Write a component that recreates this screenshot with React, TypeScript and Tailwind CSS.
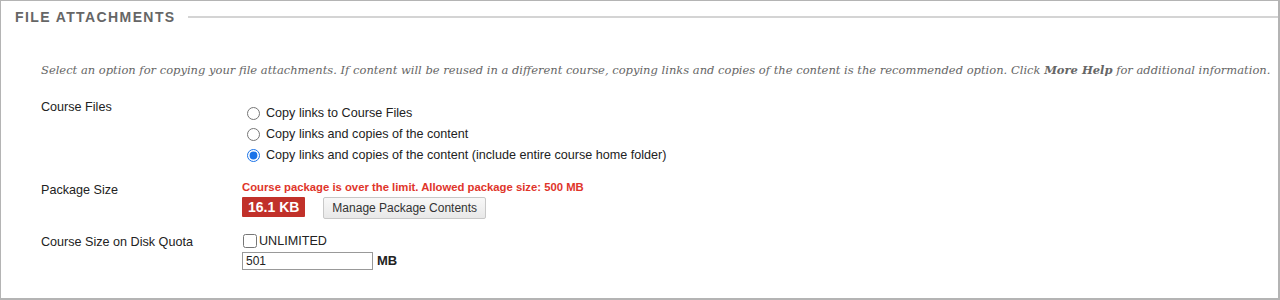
import React from "react";

export default function App() {
  const sans = { fontFamily: '"Liberation Sans", Arial, sans-serif' };
  return (
    <div className="w-[1280px] h-[300px] bg-white border-t border-l border-r-2 border-b-2 border-[#b4b4b4] overflow-hidden" style={sans}>
      <div className="flex items-center pt-[8px] pl-[14px]">
        <h2 className="text-[14px] font-bold tracking-[0.1em] text-[#666] leading-[16px]">FILE ATTACHMENTS</h2>
        <div className="flex-1 h-[2px] bg-[#d4d4d4] ml-[12px]" />
      </div>
      <p
        className="mt-[36px] pl-[40px] italic text-[11.5px] text-[#666] leading-[18px] whitespace-nowrap"
        style={{ fontFamily: '"DejaVu Serif", Georgia, serif' }}
      >
        Select an option for copying your file attachments. If content will be reused in a different course, copying links and copies of the content is the recommended option. Click <b className="font-bold">More Help</b> for additional information.
      </p>
      <div className="grid grid-cols-[201px_1fr] pl-[40px] mt-[20px] text-[12.6px] text-[#222]">
        <div className="leading-[16px]">Course Files</div>
        <div className="flex flex-col gap-[5px] pt-[6px] pl-[5px]">
          {[
            "Copy links to Course Files",
            "Copy links and copies of the content",
            "Copy links and copies of the content (include entire course home folder)",
          ].map((t, i) => (
            <label key={t} className="flex items-center gap-[6px] leading-[16px]">
              <input type="radio" name="cf" defaultChecked={i === 2} className="w-[13px] h-[13px] m-0 accent-[#1a73e8]" />
              <span>{t}</span>
            </label>
          ))}
        </div>

        <div className="mt-[19px] leading-[16px]">Package Size</div>
        <div className="mt-[17px]">
          <div className="text-[11.3px] font-bold text-[#e0352b] leading-[14px]">
            Course package is over the limit. Allowed package size: 500 MB
          </div>
          <div className="flex items-start gap-[18px] mt-[3px]">
            <span className="bg-[#c1312a] text-white font-bold text-[14px] leading-[20px] px-[6px] rounded-[1px]">16.1 KB</span>
            <button className="h-[22px] px-[8px] border border-[#c8c8c8] rounded-[2px] bg-gradient-to-b from-[#f8f8f8] to-[#e8e8e8] text-[12px] text-[#333]">
              Manage Package Contents
            </button>
          </div>
        </div>

        <div className="mt-[15px] leading-[16px]">Course Size on Disk Quota</div>
        <div className="mt-[14px]">
          <label className="flex items-center gap-[2px] pl-[1px] leading-[16px]">
            <input type="checkbox" className="w-[14px] h-[14px] m-0" />
            <span className="text-[#222]">UNLIMITED</span>
          </label>
          <div className="flex items-center gap-[4px] mt-[2px]">
            <input
              defaultValue="501"
              className="w-[131px] h-[18px] border border-[#999] px-[3px] text-[12px] text-[#222] outline-none"
              style={sans}
            />
            <span className="font-bold text-[13px]">MB</span>
          </div>
        </div>
      </div>
    </div>
  );
}
